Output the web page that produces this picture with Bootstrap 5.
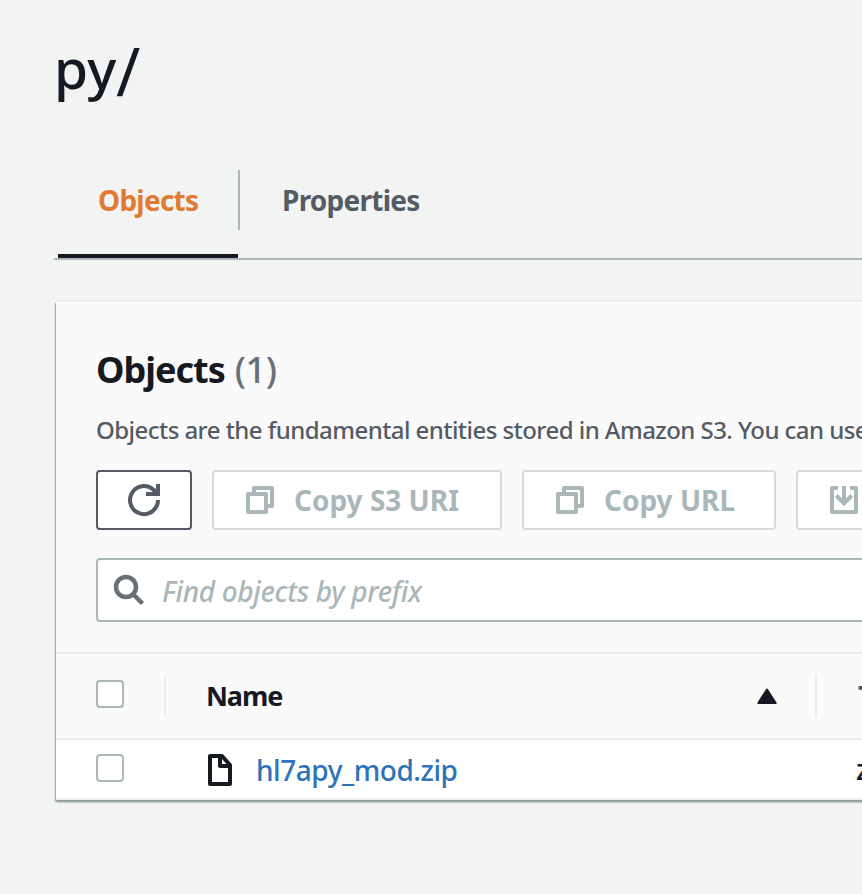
<!DOCTYPE html>
<html lang="en">
<head>
<meta charset="utf-8">
<meta name="viewport" content="width=device-width, initial-scale=1">
<title>py/ - Objects</title>
<link href="https://cdn.jsdelivr.net/npm/bootstrap@5.3.0/dist/css/bootstrap.min.css" rel="stylesheet">
<style>
body{background:#f2f3f3;color:#16191f;font-family:"Noto Sans","Open Sans",sans-serif;font-size:28px;line-height:40px;height:894px;overflow:hidden}
.page{padding:32px 0 0 54px;width:862px;height:894px}
h1{font-size:55px;line-height:72px;font-weight:500;height:138px;letter-spacing:.3px;margin:0}
.slash{display:inline-block;transform:translateY(4px) scaleY(1.22) skewX(-4deg);transform-origin:50% 62%}
.tabs{height:90px;border-bottom:2px solid #aab7b8;font-weight:700;letter-spacing:-.75px}
.tabs .nav-link{color:#545b64;line-height:60px;height:88px;padding:0 42px}
.tabs .nav-item{margin-left:4px}
.tabs .nav-item+.nav-item{margin-left:0;border-left:2px solid #aab7b8;height:60px}
.tabs .first{width:180px}
.tabs .nav-link.active{color:#e07a33;border-bottom:4px solid #16191f;padding:0 0 0 40px}
.panel{margin:42px 0 0 2px;width:1000px;height:498px;background:#fafafa;box-shadow:0 -2px 0 0 #eaeded,0 1px 0 0 #95a2a3,0 2px 2px 0 rgba(0,28,36,.5),-1px 1px 1px 0 rgba(0,28,36,.2)}
.panel-head{padding:44px 40px 0;height:350px}
h2{font-size:36px;line-height:48px;font-weight:700;margin:0;letter-spacing:-1px}
.counter{color:#687078;font-weight:500;margin-left:10px;letter-spacing:-.4px}
.desc{font-size:24px;line-height:36px;font-weight:500;color:#545b64;margin:18px 0 0;height:58px;letter-spacing:-.55px}
.tool{height:60px;border:2px solid #d5dbdb;border-radius:4px;background:#fff;color:#aab7b8;font-weight:700;font-size:28px;line-height:40px;padding:0 0 0 30px;display:flex;align-items:center;flex:none}
.tool+.tool{margin-left:20px}
.tool.refresh{width:96px;border-color:#545b64;color:#545b64;padding-left:28px}
.tool.uri{width:290px}.tool.url{width:254px}.tool.down{width:240px}
.tool svg{margin-right:18px}
.search{height:64px;border:2px solid #aab7b8;border-radius:4px;background:#fff;margin-top:28px;padding-left:14px}
.search input{font-size:28px;line-height:40px;font-style:italic;font-weight:500;letter-spacing:-.35px;padding:2px 0 0;margin-left:16px}
.search input::placeholder{color:#aab7b8;opacity:1}
.thead-row{height:88px;border:solid #eaeded;border-width:2px 0;font-weight:700}
.body-row{height:60px;background:#fff;border-bottom:2px solid #eaeded}
.form-check-input.tick{width:28px;height:28px;margin:0 40px 4px 40px;border:2px solid #aab7b8;border-radius:4px;background:#fff;flex:none}
.body-row .form-check-input.tick{margin-bottom:2px}
.divide{width:2px;height:42px;background:#eaeded;flex:none}
.name-col{width:649px;padding:0 38px 0 40px;flex:none}
.colname{font-size:27px;letter-spacing:-1.1px}
.file-col{width:649px;padding-left:42px;flex:none}
.file-col svg{margin-top:2px}
a.file{color:#2e73b8;text-decoration:none;margin:2px 0 0 24px;font-weight:500;letter-spacing:-.45px}
.type,.zip{margin-left:41px}
.type{color:#545b64}
.zip{font-weight:500}
</style>
</head>
<body>
<svg class="d-none"><symbol id="copy" viewBox="0 0 32 32"><path d="M10 10V4h18v18h-6M4 10h18v18H4z" fill="none" stroke="currentColor" stroke-width="4" stroke-linejoin="round"/></symbol></svg>
<main class="page overflow-hidden">
<h1>py<span class="slash">/</span></h1>
<ul class="nav tabs flex-nowrap">
<li class="nav-item first"><a class="nav-link active" href="#">Objects</a></li>
<li class="nav-item"><a class="nav-link" href="#">Properties</a></li>
</ul>
<section class="panel">
<div class="panel-head">
<h2 class="d-flex"><span>Objects</span><span class="counter">(1)</span></h2>
<p class="desc text-nowrap">Objects are the fundamental entities stored in Amazon S3. You can use</p>
<div class="d-flex">
<button class="btn tool refresh" aria-label="Refresh"><svg width="36" height="36" viewBox="0 0 36 36" fill="none" stroke="currentColor" stroke-width="4"><path d="M32 18A14 14 0 1 1 27.500 7.800L31 11"/><path d="M32 2v10H20"/></svg></button>
<button class="btn tool uri"><svg width="32" height="32"><use href="#copy"/></svg>Copy S3 URI</button>
<button class="btn tool url"><svg width="32" height="32"><use href="#copy"/></svg>Copy URL</button>
<button class="btn tool down" aria-label="Download"><svg width="32" height="32" viewBox="0 0 32 32" fill="none" stroke="currentColor" stroke-width="4"><path d="M10 4H4v24h24V4h-6" stroke-linejoin="round"/><path d="M16 2v18M8.200 11.500l7.800 7.800 7.800-7.800"/></svg></button>
</div>
<div class="search d-flex align-items-center"><svg class="flex-shrink-0" width="34" height="34" viewBox="0 0 34 34" fill="none" stroke="#687078" stroke-width="4.500"><circle cx="14" cy="14" r="10"/><path d="M21 21l9.500 9.500"/></svg><input class="form-control border-0 bg-transparent shadow-none" placeholder="Find objects by prefix" aria-label="Find objects by prefix"></div>
</div>
<div class="thead-row d-flex align-items-center">
<input class="form-check-input tick" type="checkbox" aria-label="Select all"><span class="divide"></span>
<div class="name-col d-flex align-items-center justify-content-between"><span class="colname">Name</span><svg width="20" height="17" viewBox="0 0 20 17"><path d="M10 1.500L18.700 15H1.300z" fill="#16191f" stroke="#16191f" stroke-width="2" stroke-linejoin="round"/></svg></div>
<span class="divide"></span><span class="type">Type</span>
</div>
<div class="body-row d-flex align-items-center">
<input class="form-check-input tick" type="checkbox" aria-label="Select hl7apy_mod.zip"><span class="divide invisible"></span>
<div class="file-col d-flex align-items-center"><svg width="24" height="32" viewBox="0 0 24 32" fill="none" stroke="#16191f" stroke-width="4" stroke-linejoin="round"><path d="M2 2h12l8 9v19H2zM12 2v10h10"/></svg><a class="file" href="#">hl7apy_mod.zip</a></div>
<span class="zip">zip</span>
</div>
</section>
</main>
<script src="https://cdn.jsdelivr.net/npm/bootstrap@5.3.0/dist/js/bootstrap.bundle.min.js"></script>
</body>
</html>
